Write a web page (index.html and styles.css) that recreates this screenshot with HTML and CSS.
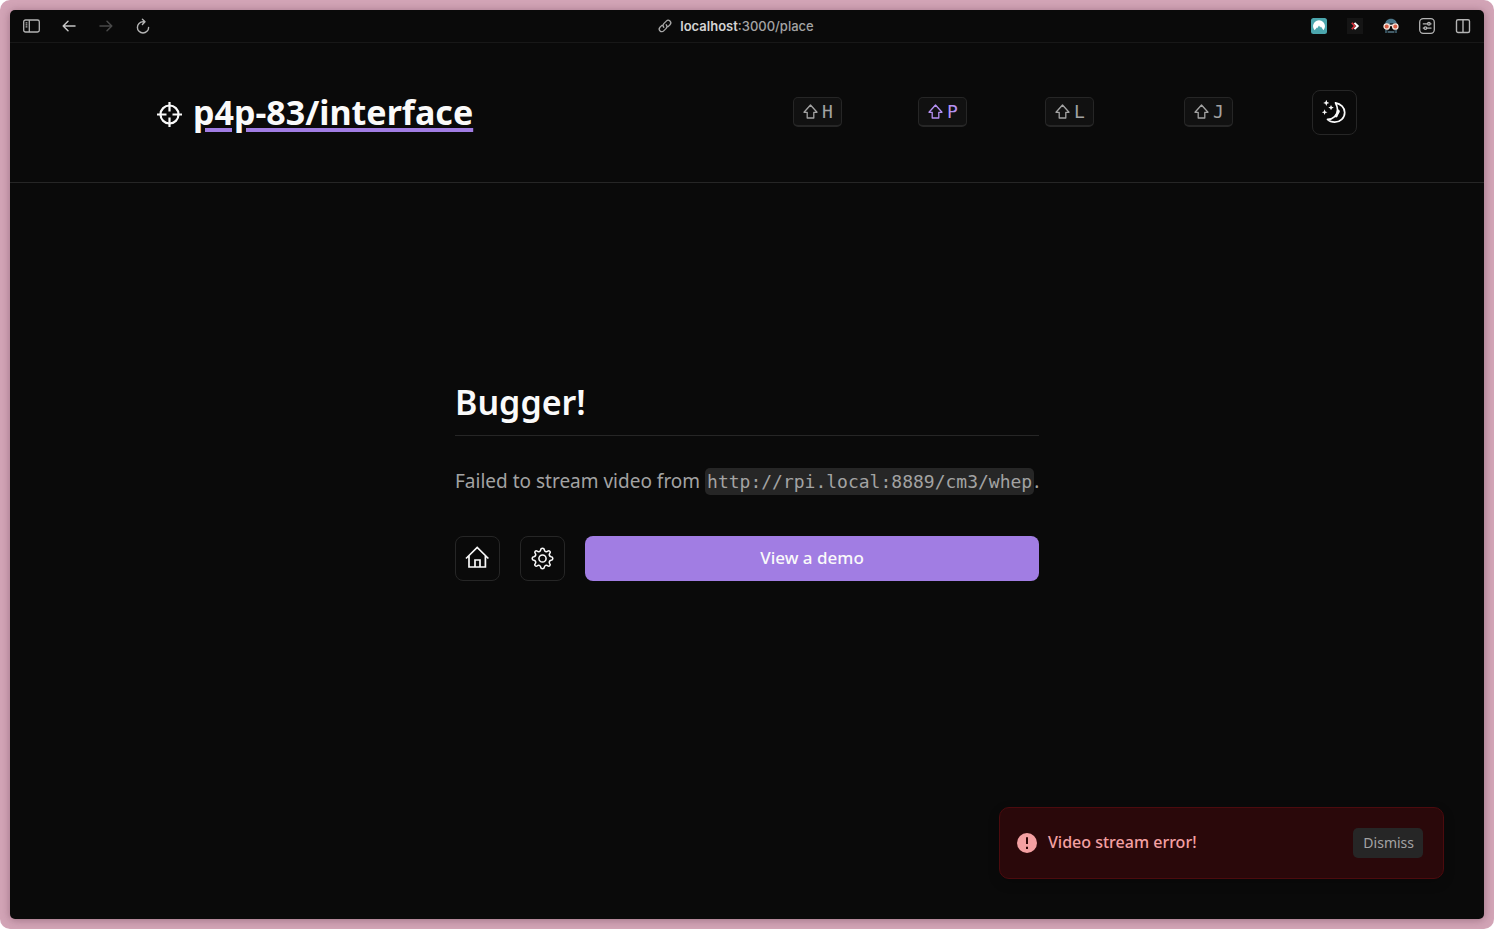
FILE: index.html
```html
<!DOCTYPE html>
<html lang="en">
<head>
<meta charset="utf-8">
<meta name="viewport" content="width=device-width, initial-scale=1">
<title>p4p-83/interface</title>
<link rel="stylesheet" href="styles.css">
</head>
<body>
<div class="desktop">
<div class="window">
  <div class="toolbar">
    <div class="tools tools-left">
      <button class="tool" aria-label="Sidebar"><svg width="17" height="16" viewBox="0 0 17 16" fill="none" stroke="#b4b4b4" stroke-width="1.3"><rect x=".700" y="2" width="15.600" height="12" rx="1.800"/><path d="M6.300 2v12M2.600 4.800h1.800M2.600 6.800h1.800M2.600 8.800h1.800"/></svg></button>
      <button class="tool" aria-label="Back"><svg width="16" height="16" viewBox="0 0 16 16" fill="none" stroke="#c4c4c4" stroke-width="1.5" stroke-linecap="round" stroke-linejoin="round"><path d="M14 8H2.200M7 3.300 2.200 8l4.800 4.700"/></svg></button>
      <button class="tool" aria-label="Forward"><svg width="16" height="16" viewBox="0 0 16 16" fill="none" stroke="#484848" stroke-width="1.5" stroke-linecap="round" stroke-linejoin="round"><path d="M2 8h11.800M9 3.300 13.800 8 9 12.700"/></svg></button>
      <button class="tool" aria-label="Reload"><svg width="16" height="16" viewBox="0 0 16 16" fill="none" stroke="#b4b4b4" stroke-width="1.4" stroke-linecap="round" stroke-linejoin="round"><path d="M9.500 3.800H8A5.600 5.600 0 1 0 13.600 9.400M7.400 1.200 10 3.800 7.400 6.500"/></svg></button>
    </div>
    <div class="address">
      <svg width="14" height="14" viewBox="0 0 14 14" fill="none" stroke="#a8a8a8" stroke-width="1.300" stroke-linecap="round"><path d="M5.800 8.200a2.600 2.600 0 0 1 0-3.600l2.500-2.500a2.500 2.500 0 0 1 3.700 3.600l-1.900 1.900M8.200 5.800a2.600 2.600 0 0 1 0 3.600l-2.500 2.500A2.500 2.500 0 0 1 2 8.300l1.900-1.900"/></svg>
      <span><b>localhost</b>:3000/place</span>
    </div>
    <div class="tools tools-right">
      <button class="tool" aria-label="VPN"><svg width="16" height="16" viewBox="0 0 16 16"><rect width="16" height="16" rx="2.500" fill="#4ba6ad"/><path d="M3.600 12.300A6 6 0 1 1 12.400 12.300L9.900 8.500 9.300 9.500 8 7.600 6.200 10.300 5.900 9.500Z" fill="#fff"/></svg></button>
      <button class="tool" aria-label="Redirects"><svg width="16" height="16" viewBox="0 0 16 16" fill="none"><rect width="16" height="16" fill="#151515"/><path d="m4.800 4.900 3 3.100-3 3.100" stroke="#d9323b" stroke-width="1.700"/><path d="M7.500 4.900 10.700 8l-3.200 3.100" stroke="#fff" stroke-width="2"/></svg></button>
      <button class="tool" aria-label="Incognito"><svg width="16" height="16" viewBox="0 0 16 16"><path d="M2 7C2 3 4.500.700 8 .700S14 3 14 7Z" fill="#4b7689"/><path d="M7 5h6v3H7z" fill="#26343b"/><path d="M2 11.500h2.500V15H2zM11.500 11.500H14V15h-2.500z" fill="#354f5b"/><path d="M5.500 13h1v2h-1zM7.500 13h1v2h-1zM9.500 13h1v2h-1z" fill="#7dafc5"/><circle cx="3.700" cy="8.500" r="2.700" fill="#d75e45" stroke="#f4e4dc" stroke-width="1.300"/><circle cx="12.300" cy="8.500" r="2.700" fill="#d75e45" stroke="#f4e4dc" stroke-width="1.300"/><path d="M6.300 7.500h3.400" stroke="#f4e4dc" stroke-width="1.500"/></svg></button>
      <button class="tool" aria-label="Page settings"><svg width="16" height="16" viewBox="0 0 16 16" fill="none" stroke="#b4b4b4" stroke-width="1.300"><rect x=".700" y=".700" width="14.600" height="14.600" rx="3.500"/><path d="M3.800 5.800h4.700M11.300 5.800h1.200M3.800 10.100h1.200M7.800 10.100h4.700"/><circle cx="9.900" cy="5.800" r="1.300"/><circle cx="6.400" cy="10.100" r="1.300"/></svg></button>
      <button class="tool" aria-label="Split view"><svg width="16" height="16" viewBox="0 0 16 16" fill="none" stroke="#b4b4b4" stroke-width="1.400"><rect x="1.500" y="1.700" width="13" height="12.800" rx="1.500"/><path d="M8 1.700v12.800"/></svg></button>
    </div>
  </div>

  <header class="header">
    <div class="header-inner">
      <a class="brand" href="#">
        <svg class="brand-mark" width="25" height="25" viewBox="0 0 25 25" fill="none" stroke="#fafafa" stroke-width="2.200"><circle cx="12.500" cy="12.500" r="9"/><path d="M12.500 0v9.500M12.500 15.500V25M0 12.500h9.500M15.500 12.500H25"/></svg>
        <span class="brand-name">p4p-83/interface</span>
      </a>
      <nav class="nav">
        <a class="key" href="#" aria-label="Home"><svg class="shift" width="15" height="15" viewBox="0 0 15 15"><path d="M7.500 1 14 8.300h-3.200V14H4.200V8.300H1Z"/></svg><kbd>H</kbd></a>
        <a class="key key-active" href="#" aria-label="Place"><svg class="shift" width="15" height="15" viewBox="0 0 15 15"><path d="M7.500 1 14 8.300h-3.200V14H4.200V8.300H1Z"/></svg><kbd>P</kbd></a>
        <a class="key" href="#" aria-label="Link"><svg class="shift" width="15" height="15" viewBox="0 0 15 15"><path d="M7.500 1 14 8.300h-3.200V14H4.200V8.300H1Z"/></svg><kbd>L</kbd></a>
        <a class="key" href="#" aria-label="Jog"><svg class="shift" width="15" height="15" viewBox="0 0 15 15"><path d="M7.500 1 14 8.300h-3.200V14H4.200V8.300H1Z"/></svg><kbd>J</kbd></a>
        <button class="icon-button" aria-label="Theme"><svg width="25" height="25" viewBox="0 0 25 25"><path d="M13.500 2.800c5.200 1 9.200 4.700 9.200 9.700 0 5.500-4.500 9.700-10 9.700-3 0-5.400-1-7.200-2.800 5.400.100 10.300-4.300 10-9.600-.100-2.800-.900-4.900-2-7Z" fill="none" stroke="#fafafa" stroke-width="1.700" stroke-linejoin="round"/><g fill="#fafafa"><path d="M15.400 9.500a2 2 0 0 1 1.800 3.400L15.500 16l-2 .500Z"/><circle cx="14.200" cy="16" r="1.400"/><path d="m4.300-.200.900 2.200 2.200.900-2.200.900-.900 2.200-.900-2.200-2.200-.900L3.400 2ZM9 4.900l.900 1.900 1.900.800-1.900.800L9 10.300l-.800-1.900-1.900-.8 1.900-.8ZM2.600 9.300l.800 2.100 2.100.8-2.100.8-.8 2.100-.8-2.100-2.100-.8 2.100-.8Z"/></g></svg></button>
      </nav>
    </div>
  </header>

  <main class="main">
    <section class="error">
      <h1 class="error-title">Bugger!</h1>
      <p class="error-text">Failed to stream video from <code class="code">http://rpi.local:8889/cm3/whep</code>.</p>
      <div class="actions">
        <button class="icon-button" aria-label="Home"><svg width="25" height="25" viewBox="0 0 25 25" fill="none" stroke="#fafafa" stroke-width="1.700"><path d="M1 12.500 12.200 1.500l11.200 11M4 10v11h16.400V10M10 21v-7h5v7"/></svg></button>
        <button class="icon-button" aria-label="Settings"><svg width="23" height="23" viewBox="0 0 25 25" fill="none" stroke="#fafafa" stroke-width="1.700" stroke-linejoin="round"><circle cx="12.500" cy="12.500" r="3.900"/><path d="M12.500 1.300Q14.300 1.300 14.500 3.100C14.800 5 16.700 5.800 18.200 4.600Q19.300 3.600 20.400 4.600T20.400 6.800C19.200 8.300 20 10.200 21.900 10.500Q23.700 10.700 23.700 12.500T21.900 14.500C20 14.800 19.200 16.700 20.400 18.200Q21.400 19.300 20.400 20.400T18.200 20.400C16.700 19.200 14.800 20 14.500 21.900Q14.300 23.700 12.500 23.700T10.500 21.900C10.200 20 8.300 19.200 6.800 20.400Q5.700 21.400 4.600 20.400T4.600 18.200C5.800 16.700 5 14.800 3.100 14.500Q1.300 14.300 1.300 12.500T3.100 10.500C5 10.200 5.800 8.300 4.600 6.800Q3.600 5.700 4.600 4.600T6.800 4.600C8.300 5.800 10.200 5 10.500 3.100Q10.700 1.300 12.500 1.300Z"/></svg></button>
        <button class="primary">View a demo</button>
      </div>
    </section>
  </main>

  <div class="toast" role="alert">
    <svg width="20" height="20" viewBox="0 0 20 20"><circle cx="10" cy="10" r="10" fill="#f4a0a2"/><path d="M10 4.300v6.800M10 13.700v2.200" stroke="#2d0607" stroke-width="2"/></svg>
    <span class="toast-text">Video stream error!</span>
    <button class="dismiss">Dismiss</button>
  </div>
</div>
</div>
</body>
</html>
```
FILE: styles.css
```css
* { box-sizing: border-box; }

body {
  margin: 0;
  background: #fff;
  color: #fafafa;
  font-family: "Noto Sans", sans-serif;
}

button {
  margin: 0;
  padding: 0;
  border: 0;
  background: none;
  color: inherit;
  font: inherit;
}

svg { display: block; flex: none; overflow: visible; }

.desktop {
  display: flex;
  min-height: 100vh;
  padding: 10px;
  border-radius: 10px;
  background: #d2a4b6;
}

.window {
  position: relative;
  display: flex;
  flex: 1;
  flex-direction: column;
  min-width: 0;
  overflow: hidden;
  border-radius: 5px;
  background: #0a0a0a;
  box-shadow: 0 1px 8px rgb(60 20 40 / 35%);
}

.toolbar {
  display: grid;
  grid-template-columns: 1fr auto 1fr;
  align-items: center;
  height: 33px;
  padding: 0 13px;
  border-bottom: 1px solid #181818;
}

.tools { display: flex; align-items: center; }
.tools-left { gap: 21px; }
.tools-right { gap: 20px; justify-content: flex-end; }

.address {
  display: flex;
  align-items: center;
  gap: 8px;
  padding-right: 22px;
  color: #a4a4a4;
  font: 500 13px/16px Inter, sans-serif;
}

.address b { color: #d4d4d4; font-weight: 600; }

.header { border-bottom: 1px solid #262626; }

.header-inner {
  display: flex;
  align-items: center;
  justify-content: space-between;
  max-width: 1220px;
  height: 139px;
  margin: 0 auto;
  padding-left: 20px;
}

.brand {
  display: flex;
  align-items: center;
  gap: 11px;
  color: #fafafa;
  font-size: 34px;
  font-weight: 700;
  line-height: 46px;
  text-decoration: none;
}

.brand-mark { margin-top: 3px; }

.brand-name {
  padding-bottom: 2px;
  text-decoration: underline #a17de3 4px;
  text-underline-offset: 3px;
}

.nav {
  display: grid;
  grid-template-columns: 125px 127px 139px 128px 45px;
  align-items: center;
  justify-items: start;
}

.key {
  display: flex;
  align-items: center;
  gap: 4px;
  height: 30px;
  margin-bottom: 1px;
  padding: 0 8px 0 9px;
  border: 1px solid #262626;
  border-bottom-width: 2px;
  border-radius: 5px;
  background: #111;
  color: #a3a3a3;
  text-decoration: none;
}

.key kbd { font: 18px/24px "DejaVu Sans Mono", monospace; }
.key-active { color: #b591f3; }
.shift { fill: none; stroke: currentColor; stroke-width: 1.3; stroke-linejoin: round; }

.icon-button {
  display: flex;
  align-items: center;
  justify-content: center;
  width: 45px;
  height: 45px;
  border: 1px solid #262626;
  border-radius: 8px;
}

.main {
  display: flex;
  flex: 1;
  align-items: center;
  justify-content: center;
  padding-bottom: 142px;
}

.error { width: 584px; max-width: 100%; }

.error-title {
  margin: 0 0 30px;
  padding-bottom: 11px;
  border-bottom: 1px solid #262626;
  font-size: 34px;
  font-weight: 600;
  line-height: 44px;
}

.error-text {
  margin: 0 0 40px;
  color: #a3a3a3;
  font-size: 19px;
  line-height: 30px;
  white-space: nowrap;
}

.code {
  padding: 3px 2px;
  border-radius: 5px;
  background: #262626;
  font: 18px/22px "DejaVu Sans Mono", monospace;
}

.actions { display: flex; gap: 20px; }

.primary {
  flex: 1;
  padding-bottom: 2px;
  border-radius: 8px;
  background: #a17de3;
  font-size: 17px;
  font-weight: 500;
}

.toast {
  position: absolute;
  right: 40px;
  bottom: 40px;
  display: flex;
  align-items: center;
  gap: 11px;
  width: 445px;
  max-width: calc(100% - 80px);
  height: 72px;
  padding: 0 20px 0 17px;
  border: 1px solid #4c0b0e;
  border-radius: 10px;
  background: #2a080a;
  box-shadow: 0 4px 12px rgb(0 0 0 / 20%);
}

.toast-text {
  flex: 1;
  padding-bottom: 2px;
  color: #f4a0a2;
  font-size: 16px;
  font-weight: 500;
}

.dismiss {
  height: 30px;
  padding: 0 9px 1px 10px;
  border-radius: 5px;
  background: #262626;
  color: #a3a3a3;
  font-size: 14px;
}
```
